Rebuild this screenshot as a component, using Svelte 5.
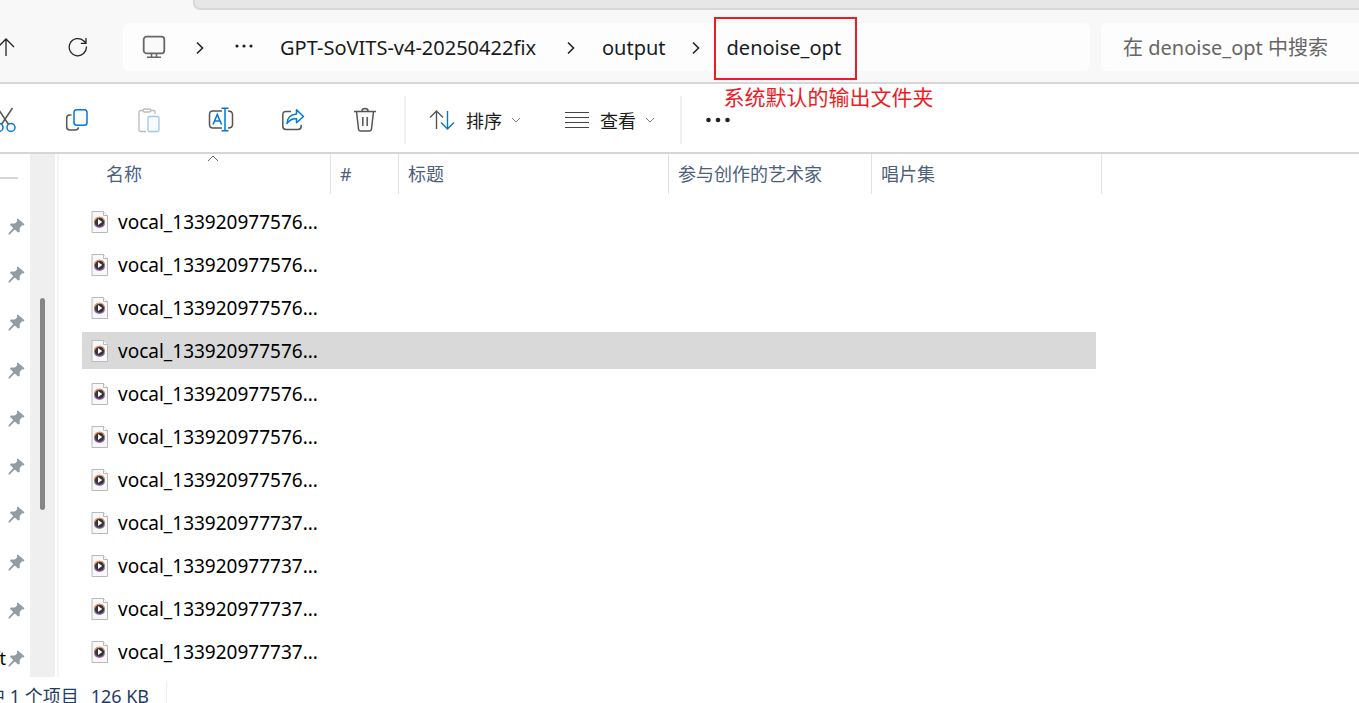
<script lang="ts">
  type FileRow = { id: number; name: string };

  const files: FileRow[] = [
    ...Array.from({ length: 7 }, (_, i) => ({ id: i, name: "vocal_133920977576..." })),
    ...Array.from({ length: 4 }, (_, i) => ({ id: i + 7, name: "vocal_133920977737..." })),
  ];

  const pins = ["", "", "", "", "", "", "", "", "", "ft"];

  let selected = $state(3);
</script>

{#snippet chevron()}
  <svg width="10" height="16" viewBox="0 0 10 16" aria-hidden="true">
    <path d="M2 2.5 7.5 8 2 13.5" fill="none" stroke="#222" stroke-width="1.6" />
  </svg>
{/snippet}

{#snippet caret()}
  <svg width="10" height="6" viewBox="0 0 10 6" aria-hidden="true">
    <path d="M1 1l4 4 4-4" fill="none" stroke="#777" />
  </svg>
{/snippet}

<div class="explorer">
  <div class="tabs"><div class="tab-edge"></div></div>

  <nav class="nav">
    <button class="nav-button" aria-label="向上">
      <svg width="20" height="20" viewBox="0 0 20 20">
        <path d="M10 19V2M2 10l8-8 8 8" fill="none" stroke="#222" stroke-width="1.3" />
      </svg>
    </button>
    <button class="nav-button" aria-label="刷新">
      <svg width="20" height="20" viewBox="0 0 20 20">
        <path
          d="M18.4 9.5A8.6 8.6 0 1 1 15.6 3.8L18 6M18 1v5.3h-5.2"
          fill="none"
          stroke="#222"
          stroke-width="1.3"
        />
      </svg>
    </button>

    <div class="address">
      <button class="pc" aria-label="此电脑">
        <svg width="24" height="24" viewBox="0 0 24 24">
          <rect x="1.7" y="1.7" width="20.6" height="16.6" rx="2.8" fill="#fafafa" stroke="#666" stroke-width="1.8" />
          <path d="M9.5 18.5v3.5M14.5 18.5v3.5M5 22.3h14" fill="none" stroke="#666" stroke-width="1.5" />
        </svg>
      </button>
      {@render chevron()}
      <button class="more" aria-label="更多">
        <svg width="18" height="6" viewBox="0 0 18 6" fill="#222">
          <circle cx="2" cy="3" r="1.6" /><circle cx="9" cy="3" r="1.6" /><circle cx="16" cy="3" r="1.6" />
        </svg>
      </button>
      <button class="root">GPT-SoVITS-v4-20250422fix</button>
      {@render chevron()}
      <button class="output">output</button>
      {@render chevron()}
      <div class="current">
        <button>denoise_opt</button>
        <span class="note">系统默认的输出文件夹</span>
      </div>
    </div>

    <input class="search" type="text" aria-label="搜索" placeholder="在 denoise_opt 中搜索" />
  </nav>

  <div class="toolbar">
    <button class="tool" aria-label="剪切">
      <svg width="24" height="26" viewBox="0 0 24 26" fill="none" stroke-width="1.5">
        <path d="M4.5 1 15.6 17.5M19.5 1 8.4 17.5" stroke="#555" />
        <circle cx="6" cy="20.5" r="4" stroke="#0078d4" /><circle cx="18" cy="20.5" r="4" stroke="#0078d4" />
      </svg>
    </button>
    <button class="tool" aria-label="复制">
      <svg width="24" height="24" viewBox="0 0 24 24" fill="none" stroke-width="1.5">
        <path d="M6.5 7H4.8Q1.7 7 1.7 10.2v8.6Q1.7 22 4.8 22h5.4q2.8 0 3.4-2.6" stroke="#555" />
        <rect x="9" y="1.7" width="13" height="15.6" rx="2.8" fill="#f8fbff" stroke="#0078d4" />
      </svg>
    </button>
    <button class="tool" aria-label="粘贴">
      <svg width="24" height="26" viewBox="0 0 24 26" fill="none" stroke-width="1.3">
        <path d="M6 3.5H3.6Q2 3.5 2 5v18q0 1.5 1.6 1.5H9M14 3.5h2.6Q18 3.5 18 5v2" stroke="#bbb" />
        <rect x="6" y="2" width="8" height="3" rx="1.5" stroke="#bbb" />
        <rect x="11" y="9.5" width="11" height="15" rx="1.5" fill="#f8fbff" stroke="#99c9ee" />
      </svg>
    </button>
    <button class="tool" aria-label="重命名">
      <svg width="26" height="26" viewBox="0 0 26 26" fill="none" stroke-width="1.5">
        <path d="M14 4H5Q1.5 4 1.5 7.5v10Q1.5 21 5 21h9M20 4q4.5 0 4.5 3.5v10q0 3.5-4.5 3.5" stroke="#555" />
        <path d="M5 17.5 9.3 7.5 13.6 17.5M6.6 14h5.4M17 1.5v22M13.5 1.3h7M13.5 23.7h7" stroke="#0078d4" />
      </svg>
    </button>
    <button class="tool" aria-label="共享">
      <svg width="24" height="24" viewBox="0 0 24 24" fill="none" stroke-width="1.5">
        <path d="M10 3.5H5Q1.8 3.5 1.8 6.7v11.6q0 3.2 3.2 3.2h12q3.2 0 3.2-3.2v-1.6" stroke="#555" />
        <path d="M15.5 1.8 22.5 8.5l-7 6.2v-4q-6-.5-9.5 4.8Q6.3 6.8 15.5 6Z" fill="#f8fbff" stroke="#0078d4" stroke-linejoin="round" />
      </svg>
    </button>
    <button class="tool" aria-label="删除">
      <svg width="24" height="26" viewBox="0 0 24 26" fill="none" stroke="#555" stroke-width="1.5">
        <path d="M3.5 4.5 5.5 22q.3 2 2.3 2h8.4q2 0 2.3-2L20.5 4.5" fill="#fafafa" />
        <path d="M1 4.5h22M9 4Q9 1.5 12 1.5T15 4M9.8 10v9M14.2 10v9" />
      </svg>
    </button>
    <span class="separator"></span>
    <button class="menu sort">
      <svg width="26" height="22" viewBox="0 0 26 22" fill="none" stroke-width="1.4">
        <path d="M7.5 20V2M1 8.5 7.5 2 14 8.5" stroke="#555" />
        <path d="M18.5 2v18M12 13.5l6.5 6.5 6.5-6.5" stroke="#0078d4" />
      </svg>
      <span>排序</span>
      {@render caret()}
    </button>
    <button class="menu view">
      <svg width="24" height="18" viewBox="0 0 24 18" fill="none" stroke="#444">
        <path d="M0 1.5h24M0 6.5h24M0 11.5h24M0 16.5h24" />
      </svg>
      <span>查看</span>
      {@render caret()}
    </button>
    <span class="separator"></span>
    <button class="menu extra" aria-label="查看更多">
      <svg width="24" height="6" viewBox="0 0 24 6" fill="#222">
        <circle cx="2.5" cy="3" r="2.3" /><circle cx="12" cy="3" r="2.3" /><circle cx="21.5" cy="3" r="2.3" />
      </svg>
    </button>
  </div>

  <main class="body">
    <aside class="sidebar">
      <div class="rule"></div>
      {#each pins as label}
        <div class="pin">
          <span>{label}</span>
          <svg width="17" height="17" viewBox="0 0 17 17" fill="#929da4">
            <path d="M9.8.5 16.5 6.3 15.6 7.5 14 7.3 11.8 10 11.6 14 10.2 14.5 6.7 11.4 1.6 16.4.5 16.5.6 15.3 5.2 10 2 6.8 2.8 5.6 6.8 5.5 9.2 3.2 8.9 1.6Z" />
          </svg>
        </div>
      {/each}
    </aside>
    <div class="scrollbar"><div class="thumb"></div></div>

    <section class="content">
      <table>
        <thead>
          <tr>
            <th class="name">
              <div>
                名称
                <svg class="ascending" width="12" height="7" viewBox="0 0 12 7" aria-hidden="true">
                  <path d="M1 6l5-5 5 5" fill="none" stroke="#666" />
                </svg>
              </div>
            </th>
            <th class="number"><div>#</div></th>
            <th class="title"><div>标题</div></th>
            <th class="artists"><div>参与创作的艺术家</div></th>
            <th><div>唱片集</div></th>
          </tr>
        </thead>
        <tbody>
          {#each files as file (file.id)}
            <tr class:selected={file.id === selected} onclick={() => (selected = file.id)}>
              <td>
                <div class="file">
                  <svg width="18" height="22" viewBox="0 0 18 22" aria-hidden="true">
                    <path d="M1 .5h11.5L16.5 4.5v17H1Z" fill="#f8f8f9" stroke="#b9b9b9" />
                    <path d="M12.5.5v4h4" fill="#fff" stroke="#b9b9b9" />
                    <circle cx="8.5" cy="11" r="5.2" fill="#3a3436" />
                    <path d="M3.4 10.5a5.2 5.2 0 0 1 10-.8" fill="none" stroke="#e79a66" stroke-width="1.2" />
                    <path d="M3.6 12.8a5.2 5.2 0 0 0 9.8 0" fill="none" stroke="#8a62a3" stroke-width="1.2" />
                    <path d="M7 8l4.2 3L7 14Z" fill="#fff" />
                  </svg>
                  <span>{file.name}</span>
                </div>
              </td>
              <td></td>
              <td></td>
              <td></td>
              <td></td>
            </tr>
          {/each}
        </tbody>
      </table>
    </section>
  </main>

  <footer class="status">
    <span>选中 1 个项目</span>
    <span class="size">126 KB</span>
  </footer>
</div>

<style>
  :global(body) {
    margin: 0;
    background: #fff;
  }

  .explorer {
    display: flex;
    flex-direction: column;
    height: 100vh;
    overflow: hidden;
    font-family: "Noto Sans", "Noto Sans CJK SC", sans-serif;
    font-size: 18px;
    color: #1b1b1b;
  }

  button {
    border: 0;
    padding: 0;
    background: none;
    color: inherit;
    font: inherit;
    white-space: nowrap;
  }

  svg {
    display: block;
    flex: none;
  }

  .tabs {
    flex: none;
    height: 10px;
    padding-left: 193px;
    background: #f8f8f8;
  }

  .tab-edge {
    box-sizing: border-box;
    height: 10px;
    border-left: 2px solid #d9d9d9;
    border-bottom: 2px solid #d9d9d9;
    border-bottom-left-radius: 7px;
    background: #e7e7e7;
  }

  .nav {
    display: flex;
    flex: none;
    align-items: center;
    height: 70px;
    padding-top: 2px;
    border-bottom: 2px solid #d6d6d6;
    background: #f8f8f8;
  }

  .nav-button {
    display: grid;
    place-items: center;
    flex: none;
    width: 72px;
    height: 48px;
  }

  .nav-button:first-child {
    margin-left: -30px;
  }

  .address {
    display: flex;
    flex: 1;
    align-items: center;
    box-sizing: border-box;
    height: 48px;
    margin: 0 11px 0 9px;
    padding: 2px 0 0 19px;
    border-radius: 6px;
    background: #fdfdfd;
    font-size: 20px;
  }

  .address button {
    padding-bottom: 2px;
  }

  .pc {
    margin-right: 29px;
  }

  .more {
    margin: 0 27px 2px 30px;
  }

  .root {
    margin-right: 30px;
  }

  .output {
    margin: 0 25px 0 26px;
  }

  .current {
    position: relative;
    display: flex;
    flex: none;
    align-items: center;
    box-sizing: border-box;
    height: 63px;
    margin-left: 13px;
    padding: 0 14px 0 11px;
    border: 2px solid #ed1c24;
  }

  .note {
    position: absolute;
    top: 63px;
    left: 8px;
    z-index: 1;
    color: #ed1c24;
    font-size: 21px;
    line-height: 30px;
    white-space: nowrap;
  }

  .search {
    box-sizing: border-box;
    flex: none;
    width: 258px;
    height: 48px;
    padding: 0 0 0 22px;
    border: 0;
    border-radius: 6px 0 0 6px;
    background: #fdfdfd;
    font: inherit;
    font-size: 20px;
  }

  .search::placeholder {
    color: #666;
    opacity: 1;
  }

  .toolbar {
    display: flex;
    flex: none;
    align-items: center;
    box-sizing: border-box;
    height: 70px;
    padding-top: 4px;
    border-bottom: 2px solid #d6d6d6;
  }

  .tool {
    display: grid;
    place-items: center;
    flex: none;
    width: 72px;
    height: 48px;
  }

  .tool:first-child {
    margin-left: -31px;
  }

  .separator {
    width: 2px;
    height: 48px;
    margin-left: 3px;
    background: #efefef;
  }

  .menu {
    display: flex;
    align-items: center;
    height: 48px;
  }

  .menu span {
    margin: 0 9px 0 11px;
  }

  .sort {
    margin-left: 23px;
  }

  .view {
    margin: 0 22px 0 44px;
  }

  .extra {
    margin-left: 24px;
  }

  .body {
    display: flex;
    flex: 1;
    min-height: 0;
    overflow: hidden;
  }

  .sidebar {
    flex: none;
    width: 30px;
    overflow: hidden;
  }

  .rule {
    width: 18px;
    height: 2px;
    margin: 23px 0;
    background: #d6d6d6;
  }

  .pin {
    display: flex;
    align-items: center;
    justify-content: flex-end;
    height: 48px;
    padding-right: 5px;
    gap: 2px;
    color: #000;
  }

  .scrollbar {
    display: grid;
    flex: none;
    grid-template-rows: 144fr 212fr 167fr;
    width: 25px;
    background: #efefef;
  }

  .thumb {
    grid-row: 2;
    width: 5px;
    margin-left: 10px;
    border-radius: 3px;
    background: #868686;
  }

  .content {
    flex: 1;
    min-width: 0;
    margin-left: 2px;
    padding-left: 23px;
    border-left: 2px solid #f5f5f5;
    overflow: hidden;
  }

  table {
    width: 1020px;
    table-layout: fixed;
    border-spacing: 0;
  }

  th {
    padding: 0 0 6px;
    color: #4c607a;
    font-weight: 400;
    text-align: left;
  }

  th div {
    position: relative;
    box-sizing: border-box;
    height: 40px;
    padding-left: 9px;
    border-right: 1px solid #e2e2e2;
    line-height: 40px;
  }

  .name {
    width: 249px;
  }

  .name div {
    padding-left: 24px;
  }

  .number {
    width: 68px;
  }

  .title {
    width: 270px;
  }

  .artists {
    width: 203px;
  }

  .ascending {
    position: absolute;
    top: 1px;
    left: 125px;
  }

  td {
    height: 37px;
    padding: 0;
    border: 0 solid transparent;
    border-width: 3px 0;
    background-clip: padding-box;
  }

  td:first-child {
    border-radius: 2px 0 0 2px;
  }

  td:last-child {
    border-right-width: 6px;
  }

  .selected td {
    background-color: #d9d9d9;
  }

  .file {
    display: flex;
    align-items: center;
    gap: 9px;
    height: 37px;
    padding-left: 9px;
    color: #000;
    font-size: 19px;
  }

  .status {
    display: flex;
    flex: none;
    gap: 12px;
    box-sizing: border-box;
    height: 26px;
    margin-left: -31px;
    padding-top: 4px;
    color: #1f3c66;
    line-height: 30px;
    white-space: nowrap;
  }

  .size {
    padding-right: 17px;
    border-right: 1px solid #eee;
  }
</style>
